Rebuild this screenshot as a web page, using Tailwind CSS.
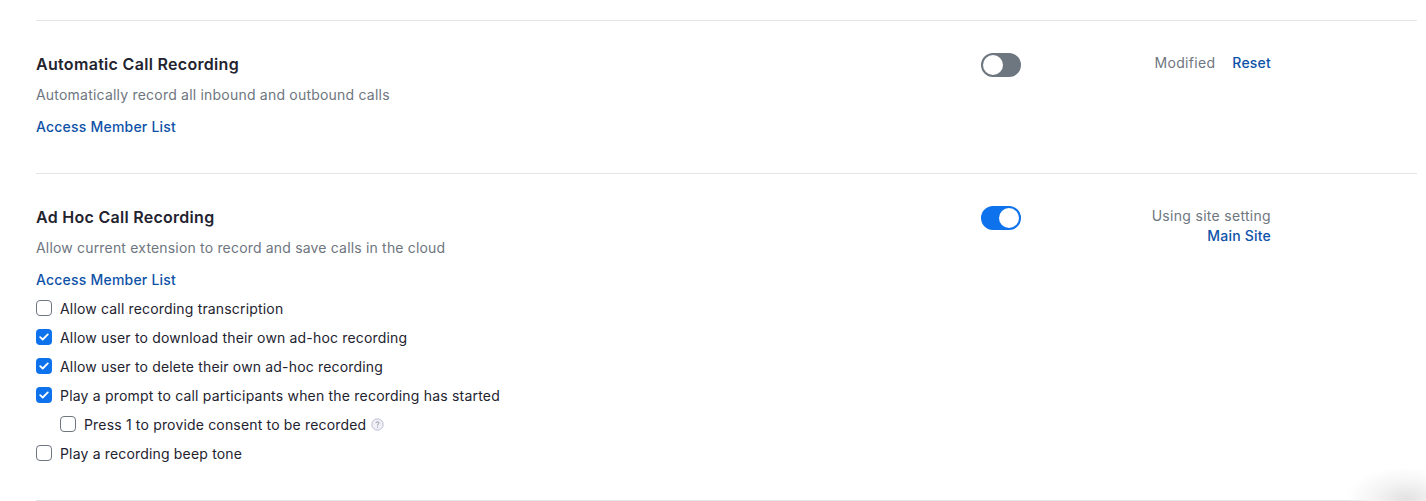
<!DOCTYPE html>
<html>
<head>
<meta charset="utf-8">
<script src="https://cdn.jsdelivr.net/npm/@tailwindcss/browser@4"></script>
</head>
<body class="bg-white">
<div class="relative h-[501px] w-[1426px] overflow-hidden bg-white pt-[20px] pl-[36px] pr-[9px] font-['Inter',sans-serif] text-[14px] tracking-[0.21px]">
  <section class="flex h-[153px] border-t border-[#e4e5e7] pt-[31px]">
    <div class="w-[945px]">
      <h3 class="h-[24px] text-[16px] leading-[24px] font-semibold tracking-[0.31px] text-[#23232f]">Automatic Call Recording</h3>
      <p class="mt-[9px] h-[20px] leading-[20px] text-[#6e7680]">Automatically record all inbound and outbound calls</p>
      <a class="mt-[12px] block h-[20px] leading-[20px] font-medium text-[#0e52a8]">Access Member List</a>
    </div>
    <div class="w-[290px] flex justify-between">
      <div class="mt-[1px] flex h-[24px] w-[40px] items-center rounded-full border-2 border-[#6e7680] bg-[#6e7680]">
        <span class="h-[20px] w-[20px] rounded-full bg-white"></span>
      </div>
      <div class="mt-[1px] flex h-[20px] gap-[17px] leading-[20px]">
        <span class="tracking-[0.3px] text-[#6e7680]">Modified</span>
        <a class="font-medium text-[#0e52a8]">Reset</a>
      </div>
    </div>
  </section>
  <section class="flex h-[327px] border-t border-[#e4e5e7] pt-[31px]">
    <div class="w-[945px]">
      <h3 class="h-[24px] text-[16px] leading-[24px] font-semibold tracking-[0.28px] text-[#23232f]">Ad Hoc Call Recording</h3>
      <p class="mt-[9px] h-[20px] leading-[20px] tracking-[0.18px] text-[#6e7680]">Allow current extension to record and save calls in the cloud</p>
      <a class="mt-[12px] block h-[20px] leading-[20px] font-medium text-[#0e52a8]">Access Member List</a>
      <ul class="mt-[8px] flex flex-col gap-[9px] tracking-[0.17px] text-[#23232f]">
        <li class="flex h-[20px] items-center gap-[8px]">
          <span class="h-[16px] w-[16px] rounded-[4px] border border-[#6e7680] bg-white"></span>
          <span>Allow call recording transcription</span>
        </li>
        <li class="flex h-[20px] items-center gap-[8px]">
          <span class="flex h-[16px] w-[16px] items-center justify-center rounded-[4px] bg-[#0e72ed]"><svg width="10" height="8" viewBox="0 0 10 8" fill="none"><path d="M1.2 4.2 3.7 6.5 8.8 1.4" stroke="#fff" stroke-width="1.8" stroke-linecap="round" stroke-linejoin="round"/></svg></span>
          <span>Allow user to download their own ad-hoc recording</span>
        </li>
        <li class="flex h-[20px] items-center gap-[8px]">
          <span class="flex h-[16px] w-[16px] items-center justify-center rounded-[4px] bg-[#0e72ed]"><svg width="10" height="8" viewBox="0 0 10 8" fill="none"><path d="M1.2 4.2 3.7 6.5 8.8 1.4" stroke="#fff" stroke-width="1.8" stroke-linecap="round" stroke-linejoin="round"/></svg></span>
          <span>Allow user to delete their own ad-hoc recording</span>
        </li>
        <li class="flex h-[20px] items-center gap-[8px]">
          <span class="flex h-[16px] w-[16px] items-center justify-center rounded-[4px] bg-[#0e72ed]"><svg width="10" height="8" viewBox="0 0 10 8" fill="none"><path d="M1.2 4.2 3.7 6.5 8.8 1.4" stroke="#fff" stroke-width="1.8" stroke-linecap="round" stroke-linejoin="round"/></svg></span>
          <span class="tracking-[0.2px]">Play a prompt to call participants when the recording has started</span>
        </li>
        <li class="flex h-[20px] items-center gap-[8px] pl-[24px]">
          <span class="h-[16px] w-[16px] rounded-[4px] border border-[#6e7680] bg-white"></span>
          <span>Press 1 to provide consent to be recorded</span>
          <svg class="-ml-[3px]" width="13" height="13" viewBox="0 0 12 12" fill="none"><circle cx="6" cy="6" r="5.2" fill="#f0f0f6" stroke="#b9bbd0" stroke-width="0.9"/><path d="M4.6 4.8C4.6 4 5.2 3.5 6 3.5S7.4 4 7.4 4.7C7.4 5.6 6 5.7 6 6.9" stroke="#7d7f9a" stroke-width="0.8" fill="none"/><circle cx="6" cy="8.4" r="0.5" fill="#7d7f9a"/></svg>
        </li>
        <li class="flex h-[20px] items-center gap-[8px]">
          <span class="h-[16px] w-[16px] rounded-[4px] border border-[#6e7680] bg-white"></span>
          <span>Play a recording beep tone</span>
        </li>
      </ul>
    </div>
    <div class="w-[290px] flex justify-between">
      <div class="mt-[1px] flex h-[24px] w-[40px] items-center justify-end rounded-full border-2 border-[#0e72ed] bg-[#0e72ed]">
        <span class="h-[20px] w-[20px] rounded-full bg-white"></span>
      </div>
      <div class="mt-[1px] text-right leading-[20px]">
        <div class="tracking-[0.3px] text-[#6e7680]">Using site setting</div>
        <a class="block font-medium text-[#0e52a8]">Main Site</a>
      </div>
    </div>
  </section>
  <div class="border-t border-[#e4e5e7]"></div>
  <div class="absolute -right-[40px] -bottom-[30px] h-[64px] w-[120px] rounded-full bg-[radial-gradient(closest-side,#e2e2e2_0%,#f5f5f5_55%,#ffffff00_100%)]"></div>
</div>
</body>
</html>
